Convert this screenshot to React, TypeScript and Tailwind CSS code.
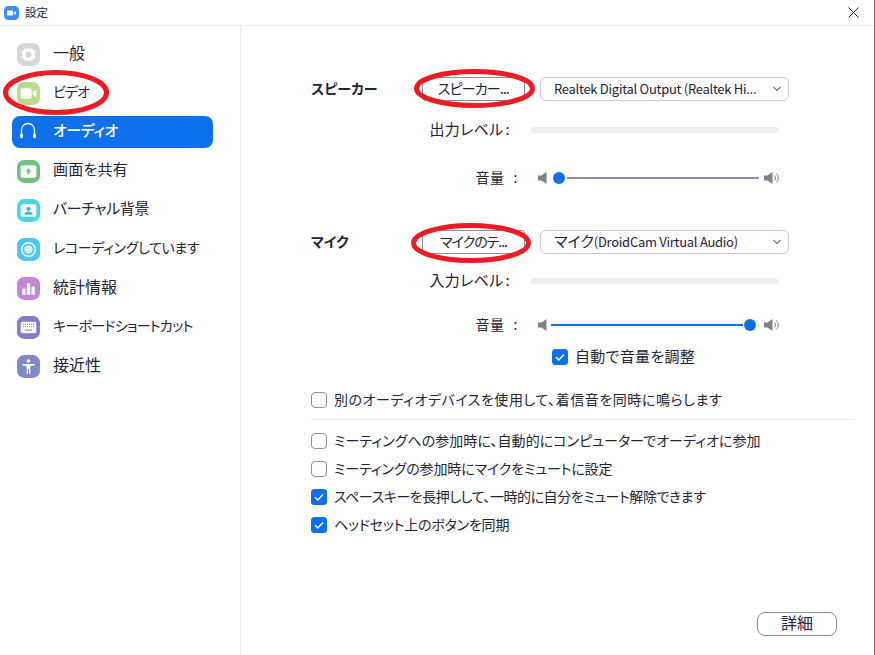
import type { ReactNode } from 'react';

const jp = "font-['Noto_Sans_CJK_JP','Noto_Sans',sans-serif] [font-feature-settings:'palt']";

function Tile({ color, children }: { color: string; children: ReactNode }) {
  return (
    <svg width="23" height="23" viewBox="0 0 22 22" className="shrink-0">
      <rect width="22" height="22" rx="7" fill={color} />
      {children}
    </svg>
  );
}

const navItems: Array<{ label: string; text: string; icon: ReactNode; active?: boolean }> = [
  {
    label: '一般',
    text: 'text-[16px]',
    icon: (
      <Tile color="#d6d6d6">
        <path
          d="M11 4l1.500 1.500 2-.5 1 1.700 2 .6v2L16.300 11l1.200 1.600v2l-2 .6-1 1.700-2-.5L11 18l-1.500-1.600-2 .5-1-1.700-2-.6v-2L5.700 11 4.500 9.300v-2l2-.6 1-1.700 2 .5z"
          fill="#fff"
        />
        <circle cx="11" cy="11" r="2.800" fill="#d6d6d6" />
      </Tile>
    ),
  },
  {
    label: 'ビデオ',
    text: 'text-[14px] tracking-[-1px]',
    icon: (
      <Tile color="#b9db8c">
        <rect x="3.500" y="6" width="10.500" height="10" rx="2" fill="#fff" />
        <path d="M14.800 10l3.700-2.700v7.400L14.800 12z" fill="#fff" />
      </Tile>
    ),
  },
  {
    label: 'オーディオ',
    text: 'text-[15px] tracking-[-0.4px]',
    active: true,
    icon: (
      <svg width="23" height="23" viewBox="0 0 23 23" className="shrink-0">
        <path d="M4.500 15V9a6.500 6.500 0 0 1 13 0v6" fill="none" stroke="#fff" strokeWidth="1.300" />
        <rect x="3" y="12.500" width="3" height="4.700" rx="1.500" fill="#fff" />
        <rect x="16" y="12.500" width="3" height="4.700" rx="1.500" fill="#fff" />
      </svg>
    ),
  },
  {
    label: '画面を共有',
    text: 'text-[15px] tracking-[0.2px]',
    icon: (
      <Tile color="#70c17f">
        <rect x="3.500" y="5" width="15" height="12" rx="2" fill="#fff" />
        <path d="M11 8l2.800 3H12v2.500h-2V11H8.200z" fill="#70c17f" />
      </Tile>
    ),
  },
  {
    label: 'バーチャル背景',
    text: 'text-[15px] tracking-[-0.4px]',
    icon: (
      <Tile color="#4fd5e2">
        <rect x="3.500" y="5" width="15" height="12" rx="2" fill="#fff" />
        <circle cx="11" cy="9.500" r="2" fill="#3fb8c9" />
        <path d="M7 15c0-2 1.800-3 4-3s4 1 4 3z" fill="#3fb8c9" />
      </Tile>
    ),
  },
  {
    label: 'レコーディングしています',
    text: 'text-[14px] tracking-[-0.35px]',
    icon: (
      <Tile color="#4fc4f8">
        <circle cx="11" cy="11" r="6.500" fill="none" stroke="#fff" strokeWidth="1.400" />
        <circle cx="11" cy="11" r="4" fill="#fff" fillOpacity="0.750" />
      </Tile>
    ),
  },
  {
    label: '統計情報',
    text: 'text-[16px]',
    icon: (
      <Tile color="#c287d6">
        <rect x="5" y="11" width="3.200" height="6" rx="0.500" fill="#fff" />
        <rect x="9.400" y="6" width="3.200" height="11" rx="0.500" fill="#fff" />
        <rect x="13.800" y="9" width="3.200" height="8" rx="0.500" fill="#fff" />
      </Tile>
    ),
  },
  {
    label: 'キーボードショートカット',
    text: 'text-[14px] tracking-[-0.7px]',
    icon: (
      <Tile color="#8879c9">
        <rect x="3.500" y="5.500" width="15" height="11" rx="2" fill="#fff" />
        <path d="M5.500 8h11M5.500 10.300h11" stroke="#8879c9" strokeWidth="1" strokeDasharray="1 1" />
        <path d="M7.500 13.500h7" stroke="#8879c9" strokeWidth="1" />
      </Tile>
    ),
  },
  {
    label: '接近性',
    text: 'text-[16px]',
    icon: (
      <Tile color="#7f88c9">
        <circle cx="11" cy="5.800" r="1.700" fill="#fff" />
        <path d="M5 8.500h12v1.300l-4.200.7V18h-1.300v-4.500h-1V18H9.200v-7.500L5 9.800z" fill="#fff" />
      </Tile>
    ),
  },
];

function Speaker({ waves }: { waves?: boolean }) {
  return (
    <svg width={waves ? 16 : 9} height="12" viewBox={waves ? '0 0 16 12' : '0 0 9 12'} className="shrink-0">
      <path d="M0 3.500h3.500L8.500 0v12l-5-3.500H0z" fill="#7d8088" />
      {waves && (
        <>
          <path d="M10.500 3.500a3.500 3.500 0 0 1 0 5" fill="none" stroke="#7d8088" strokeWidth="1" />
          <path d="M12.500 1.500a6.500 6.500 0 0 1 0 9" fill="none" stroke="#7d8088" strokeWidth="1" />
        </>
      )}
    </svg>
  );
}

function Checkbox({ checked }: { checked?: boolean }) {
  if (checked) {
    return (
      <svg width="16" height="16" viewBox="0 0 16 16" className="shrink-0">
        <rect width="16" height="16" rx="3.500" fill="#0e71eb" />
        <path d="M4 8.300l2.800 2.700L12 5.600" fill="none" stroke="#fff" strokeWidth="1.500" />
      </svg>
    );
  }
  return <span className="h-4 w-4 shrink-0 rounded-[4px] border border-[#8f8f8f] bg-white" />;
}

function CheckRow({
  label,
  checked,
  className,
  text,
}: {
  label: string;
  checked?: boolean;
  className?: string;
  text: string;
}) {
  return (
    <div className={`flex h-6 items-center gap-[7px] ${className ?? ''}`}>
      <Checkbox checked={checked} />
      <span className={`whitespace-nowrap pb-[2px] text-[#232333] ${text}`}>{label}</span>
    </div>
  );
}

function Device({
  label,
  test,
  select,
  hint,
  testText,
}: {
  label: string;
  test: string;
  select: string;
  hint?: string;
  testText: string;
}) {
  return (
    <div className="flex h-6 items-center">
      <span className="w-[111px] pb-[2px] text-[14px] font-bold text-[#232333]">{label}</span>
      <button
        className={`flex h-6 w-[103px] items-center justify-center rounded-[3px] border border-[#8f8f8f] bg-white pb-[2px] text-[14px] text-[#232333] ${testText}`}
      >
        {test}
      </button>
      <div className="ml-[15px] flex h-6 w-[249px] items-center justify-between rounded-md border border-[#c9c9d6] bg-white pl-[13px] pr-[6px]">
        {hint ? (
          <span className="flex items-center whitespace-nowrap text-[#232333]">
            <span className="pb-[2px] text-[15px]">{select}</span>
            <span className="text-[13px] tracking-[-0.28px]">{hint}</span>
          </span>
        ) : (
          <span className="whitespace-nowrap text-[13px] tracking-[-0.28px] text-[#232333]">{select}</span>
        )}
        <svg width="10" height="6" viewBox="0 0 10 6">
          <path d="M1.500 1l3.500 3.500L8.500 1" fill="none" stroke="#6e7680" strokeWidth="1.200" />
        </svg>
      </div>
    </div>
  );
}

function Level({ label, className }: { label: string; className: string }) {
  return (
    <div className={`flex h-6 items-center ${className}`}>
      <span className="flex w-[209px] justify-end gap-[2px] pb-[2px] pr-[10px] text-[15px] tracking-[0.3px] text-[#232333]">
        <span>{label}</span>
        <span>:</span>
      </span>
      <div className="ml-[11px] h-[6px] w-[247px] rounded-full bg-[#ededf0]" />
    </div>
  );
}

function Volume({ full, className }: { full?: boolean; className: string }) {
  return (
    <div className={`flex h-6 items-center ${className}`}>
      <span className="flex w-[207px] justify-end gap-[9px] pb-[2px] text-[14px] tracking-[0.5px] text-[#232333]">
        <span>音量</span>
        <span>:</span>
      </span>
      <div className="ml-[20px] flex items-center">
        <Speaker />
        {full ? (
          <>
            <div className="ml-[4px] h-[2px] w-[192px] bg-[#0e71eb]" />
            <div className="ml-px h-3 w-3 rounded-full bg-[#0e71eb]" />
            <div className="ml-[2px] h-px w-px bg-[#8f8fa8]" />
            <div className="ml-[5px]">
              <Speaker waves />
            </div>
          </>
        ) : (
          <>
            <div className="ml-[6px] h-3 w-3 rounded-full bg-[#0e71eb]" />
            <div className="ml-[2px] h-[2px] w-[192px] bg-[#8f8fa8]" />
            <div className="ml-[5px]">
              <Speaker waves />
            </div>
          </>
        )}
      </div>
    </div>
  );
}

export default function App() {
  return (
    <div className={`relative flex h-[655px] w-[875px] flex-col overflow-hidden border-r border-[#6b6b6b] bg-white ${jp}`}>
      <header className="flex h-[26px] shrink-0 items-center border-b border-[#ededf0] pl-[4px] pr-[15px]">
        <svg width="15" height="14" viewBox="0 0 15 14">
          <rect width="15" height="14" rx="4.500" fill="#3d8bfd" />
          <rect x="3" y="4.500" width="6" height="5" rx="1" fill="#fff" />
          <path d="M9.500 6.500l2.500-1.500v4L9.500 7.500z" fill="#fff" />
        </svg>
        <span className="ml-[6px] text-[11.500px] text-[#232333]">設定</span>
        <svg width="11" height="11" viewBox="0 0 11 11" className="ml-auto">
          <path d="M.5.5l10 10M10.500.5l-10 10" stroke="#232333" strokeWidth="1" />
        </svg>
      </header>
      <div className="flex min-h-0 flex-1">
        <nav className="flex w-[241px] shrink-0 flex-col gap-[7px] border-r border-[#ededf0] pl-[12px] pr-[27px] pt-[12px]">
          {navItems.map((item) => (
            <div
              key={item.label}
              className={`flex h-8 items-center gap-[13px] rounded-lg pl-[5px] ${
                item.active ? 'bg-[#0e71eb] font-medium text-white' : 'text-[#232333]'
              }`}
            >
              {item.icon}
              <span className={`whitespace-nowrap pb-[4px] ${item.text}`}>{item.label}</span>
            </div>
          ))}
        </nav>
        <main className="flex min-w-0 flex-1 flex-col pb-[19px] pl-[70px] pr-[20px] pt-[51px]">
          <Device
            label="スピーカー"
            test="スピーカー..."
            testText="tracking-[-0.8px]"
            select="Realtek Digital Output (Realtek Hi..."
          />
          <Level label="出力レベル" className="mt-[17px]" />
          <Volume className="mt-[24px]" />
          <div className="mt-[40px]">
            <Device
              label="マイク"
              test="マイクのテ..."
              testText="tracking-[-1px]"
              select="マイク"
              hint="(DroidCam Virtual Audio)"
            />
          </div>
          <Level label="入力レベル" className="mt-[15px]" />
          <Volume full className="mt-[20px]" />
          <CheckRow label="自動で音量を調整" checked className="ml-[241px] mt-[8px]" text="text-[15px] tracking-[0.3px]" />
          <CheckRow
            label="別のオーディオデバイスを使用して、着信音を同時に鳴らします"
            className="mt-[19px]"
            text="text-[14px] tracking-[0.55px]"
          />
          <div className="mt-[7px] h-px bg-[#ededf0]" />
          <div className="mt-[9px] flex flex-col gap-1">
            <CheckRow
              label="ミーティングへの参加時に、自動的にコンピューターでオーディオに参加"
              text="text-[14px] tracking-[0.05px]"
            />
            <CheckRow label="ミーティングの参加時にマイクをミュートに設定" text="text-[14px] tracking-[-0.15px]" />
            <CheckRow
              label="スペースキーを長押しして、一時的に自分をミュート解除できます"
              checked
              text="text-[14px] tracking-[-0.45px]"
            />
            <CheckRow label="ヘッドセット上のボタンを同期" checked text="text-[14px] tracking-[-0.2px]" />
          </div>
          <button className="mr-[17px] mt-auto flex h-6 w-20 items-center justify-center self-end rounded-lg border border-[#8f8f8f] bg-white pb-[4px] text-[16px] text-[#232333]">
            詳細
          </button>
        </main>
      </div>
      {/* red hand-drawn annotations over the window */}
      <svg width="875" height="655" className="pointer-events-none absolute inset-0">
        <ellipse cx="56" cy="92.500" rx="50.500" ry="20" fill="none" stroke="#ed1c24" strokeWidth="5" />
        <ellipse cx="474.500" cy="88.500" rx="58" ry="17" fill="none" stroke="#ed1c24" strokeWidth="5" />
        <ellipse cx="471" cy="243" rx="57.500" ry="17.500" fill="none" stroke="#ed1c24" strokeWidth="5" />
      </svg>
    </div>
  );
}
